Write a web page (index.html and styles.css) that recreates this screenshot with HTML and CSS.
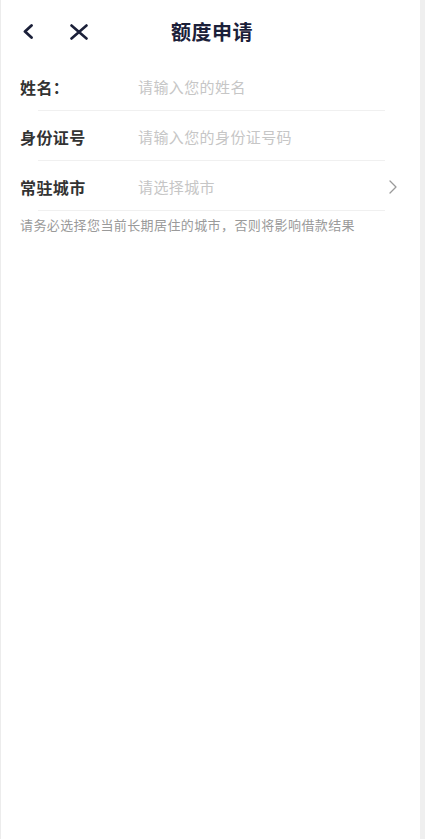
FILE: index.html
```html
<!DOCTYPE html>
<html lang="zh">
<head>
<meta charset="utf-8">
<title>额度申请</title>
<link rel="stylesheet" href="styles.css">
</head>
<body>
<div class="page">
  <header class="nav">
    <div class="nav-icons">
      <svg class="icon-back" width="12" height="15" viewBox="0 0 12 15"><path d="M9.5 1.5 L3 7.5 L9.5 13.5" fill="none" stroke="#1b2039" stroke-width="2.8" stroke-linecap="round" stroke-linejoin="round"/></svg>
      <svg class="icon-close" width="20" height="16" viewBox="0 0 20 16"><path d="M2.5 1.5 L17.5 14.5 M17.5 1.5 L2.5 14.5" fill="none" stroke="#1b2039" stroke-width="2.6" stroke-linecap="round"/></svg>
    </div>
    <h1 class="title">额度申请</h1>
  </header>
  <main class="form">
    <div class="row">
      <span class="label">姓名：</span>
      <span class="placeholder">请输入您的姓名</span>
    </div>
    <div class="divider"></div>
    <div class="row">
      <span class="label">身份证号</span>
      <span class="placeholder">请输入您的身份证号码</span>
    </div>
    <div class="divider"></div>
    <div class="row">
      <span class="label">常驻城市</span>
      <span class="placeholder">请选择城市</span>
      <svg class="arrow" width="8" height="14" viewBox="0 0 8 14"><path d="M1 1 L7 7 L1 13" fill="none" stroke="#9a9a9a" stroke-width="1.3" stroke-linecap="round" stroke-linejoin="round"/></svg>
    </div>
    <div class="divider"></div>
    <p class="hint">请务必选择您当前长期居住的城市，否则将影响借款结果</p>
  </main>
</div>
</body>
</html>
```
FILE: styles.css
```css
* { box-sizing: border-box; }
html, body {
  margin: 0;
  padding: 0;
  height: 100%;
}
body {
  background: #efefef;
  font-family: "Noto Sans CJK SC", "Noto Sans", sans-serif;
}
.page {
  width: 420px;
  min-height: 100%;
  background: #ffffff;
  border-left: 1px solid #ececec;
}
.nav {
  height: 61px;
  display: grid;
  grid-template-columns: 1fr;
  align-items: center;
}
.nav-icons, .title { grid-area: 1 / 1; }
.nav-icons {
  display: flex;
  align-items: center;
  padding-left: 21px;
  gap: 35px;
  padding-top: 2px;
}
.icon-close { margin-top: 1px; }
.title {
  margin: 0;
  text-align: center;
  font-size: 20px;
  font-weight: 700;
  color: #1b2039;
  padding-left: 3px;
  padding-top: 1px;
  letter-spacing: 0.5px;
}
.row {
  height: 49px;
  display: flex;
  align-items: center;
  padding: 2px 23px 0 19px;
}
.label {
  width: 118px;
  flex: none;
  font-size: 16px;
  font-weight: 700;
  color: #333333;
  letter-spacing: 0.4px;
}
.placeholder {
  flex: 1;
  font-size: 15px;
  color: #c6c6c6;
  letter-spacing: 0.4px;
}
.arrow { flex: none; }
.divider {
  height: 1px;
  background: #f0f0f0;
  margin: 0 35px 0 37px;
}
.hint {
  margin: 4px 0 0 19px;
  font-size: 13px;
  line-height: 20px;
  color: #9a9a9a;
  letter-spacing: 0.4px;
}
```
